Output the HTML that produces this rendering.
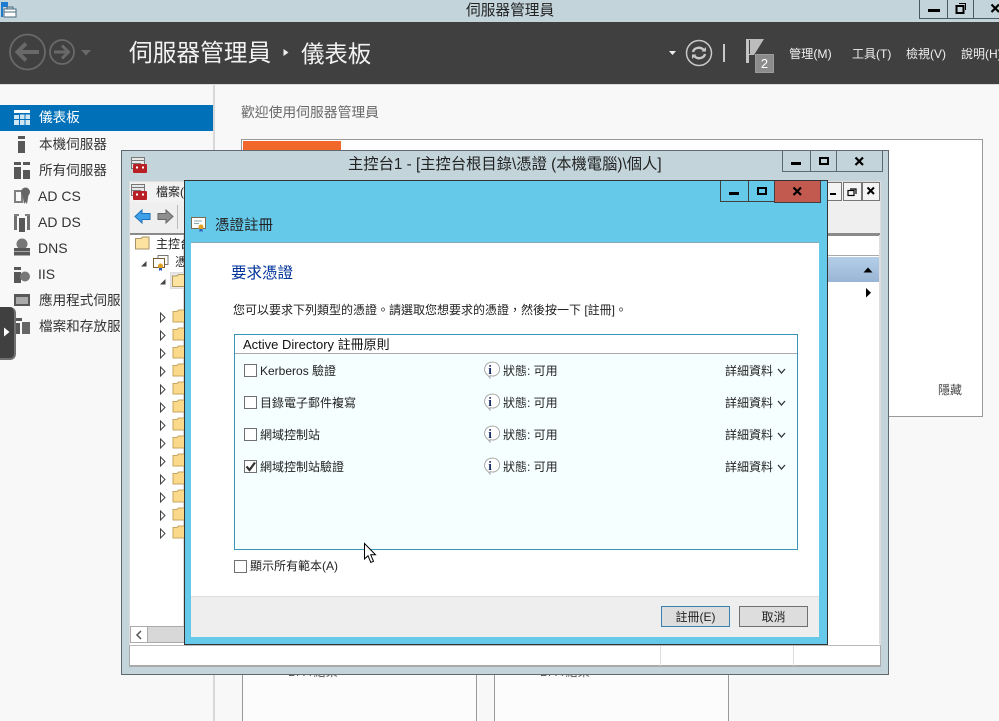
<!DOCTYPE html>
<html><head><meta charset="utf-8">
<style>
html,body{margin:0;padding:0;width:999px;height:721px;overflow:hidden;background:#f8f8f8}
body{position:relative;font-family:"Liberation Sans","Noto Sans CJK TC",sans-serif;font-size:12px;color:#222}
.a{position:absolute;box-sizing:border-box}
.t{position:absolute;white-space:nowrap;line-height:16px}
svg{position:absolute;overflow:visible}
.nav{position:absolute;left:39px;font-size:13.6px;color:#333;line-height:18px;white-space:nowrap}
.en{left:38px;font-size:14px}
.btn{position:absolute;box-sizing:border-box;border:1px solid #4b5a62}
.row{font-size:12px;color:#222}
.cb{position:absolute;left:244px;width:13px;height:13px;border:1px solid #707070;background:#fff;box-sizing:border-box}
</style></head><body>

<!-- main title bar -->
<div class="a" style="left:0;top:0;width:999px;height:22px;background:#c3d5db"></div>
<div class="t" style="left:466px;top:3px;font-size:14.700px;color:#222">伺服器管理員</div>
<svg style="left:1px;top:2px" width="16" height="16"><rect x="0" y="0" width="7" height="5" fill="#1d7bd0"/><rect x="0" y="5" width="2" height="10" fill="#1d7bd0"/><rect x="3" y="7" width="12" height="8" fill="#fff" stroke="#4a6a80"/><rect x="6" y="5" width="6" height="2" fill="none" stroke="#4a6a80"/><line x1="3" y1="10" x2="15" y2="10" stroke="#4a6a80"/></svg>
<div class="btn" style="left:919px;top:-1px;width:29px;height:20px;border-right:none"></div>
<div class="a" style="left:928px;top:9px;width:12px;height:3px;background:#000"></div>
<div class="btn" style="left:947px;top:-1px;width:27px;height:20px"></div>
<svg style="left:955px;top:2px" width="12" height="12"><rect x="1.500" y="4" width="7" height="7" fill="none" stroke="#000" stroke-width="2"/><path d="M4 1.500H10.500V8" fill="none" stroke="#000" stroke-width="1"/></svg>
<div class="btn" style="left:973px;top:-1px;width:30px;height:20px"></div>
<svg style="left:991px;top:4px" width="9" height="9"><path d="M.5 .5L8 8M8 .5L.5 8" stroke="#000" stroke-width="2.200"/></svg>

<!-- dark header -->
<div class="a" style="left:0;top:22px;width:999px;height:62px;background:#404040"></div>
<div class="a" style="left:0;top:84px;width:999px;height:1px;background:#dcdcdc"></div>
<svg style="left:8px;top:33px" width="85" height="40" fill="none" stroke="#696969">
<circle cx="19.500" cy="19" r="17.500" stroke-width="1.800"/>
<path d="M31 19H10M18 10.500L9.500 19L18 27.500" stroke-width="4"/>
<circle cx="54" cy="19" r="12" stroke-width="1.800"/>
<path d="M46 19H61M54 12.500L60.500 19L54 25.500" stroke-width="3"/>
<path d="M73 17H83L78 22.500Z" fill="#696969" stroke="none"/>
</svg>
<div class="t" style="left:129px;top:39px;font-size:23.700px;line-height:30px;color:#f2f2f2">伺服器管理員</div>
<svg style="left:283px;top:48px" width="8" height="10"><path d="M.5 1L5.500 4.500L.5 8Z" fill="#eee"/></svg>
<div class="t" style="left:301px;top:39px;font-size:23.400px;line-height:30px;color:#f2f2f2">儀表板</div>
<svg style="left:668px;top:50px" width="10" height="6"><path d="M1 1H8L4.500 5Z" fill="#eee"/></svg>
<svg style="left:685px;top:39px" width="28" height="28" fill="none"><circle cx="14" cy="14" r="12.500" stroke="#c8c8c8" stroke-width="1.500"/><path d="M8 13C9 8.500 16 7 19 11.500M20 15C19 19.500 12 21 9 16.500" stroke="#c8c8c8" stroke-width="2.400"/><path d="M16.500 12.500L21 12.500L21 8ZM11.500 15.500L7 15.500L7 20Z" fill="#c8c8c8"/></svg>
<div class="a" style="left:723px;top:44px;width:2px;height:18px;background:#c8c8c8"></div>
<svg style="left:745px;top:39px" width="20" height="24"><rect x="1" y="0" width="3" height="24" fill="#c4c4c4"/><path d="M4 0H19L9 16L4 16Z" fill="#bcbcbc"/><rect x="4" y="1" width="1" height="14" fill="#404040"/></svg>
<div class="a" style="left:755px;top:54px;width:19px;height:19px;background:#8c8c8c;border:1px solid #9b9b9b;color:#fff;font-size:13px;line-height:18px;text-align:center">2</div>
<div class="t" style="left:789px;top:46px;color:#f0f0f0;font-size:12.200px">管理(M)</div>
<div class="t" style="left:852px;top:46px;color:#f0f0f0;font-size:12px">工具(T)</div>
<div class="t" style="left:906px;top:46px;color:#f0f0f0;font-size:12px">檢視(V)</div>
<div class="t" style="left:961px;top:46px;color:#f0f0f0;font-size:12px">說明(H)</div>

<!-- sidebar -->
<div class="a" style="left:0;top:85px;width:213px;height:636px;background:#f8f8f8"></div>
<div class="a" style="left:213px;top:85px;width:2px;height:636px;background:#d8d8d8"></div>
<div class="a" style="left:215px;top:85px;width:784px;height:636px;background:#f8f8f8"></div>
<div class="a" style="left:0;top:105px;width:213px;height:26px;background:#0070b9"></div>
<svg style="left:14px;top:110px" width="16" height="15"><rect width="16" height="3" fill="#fff"/><g fill="#cfe6f5"><rect y="5" width="5" height="4"/><rect x="6" y="4.500" width="4.500" height="4.500"/><rect x="11.500" y="4.500" width="4.500" height="4.500"/><rect y="10" width="5" height="5"/><rect x="6" y="10" width="4.500" height="5"/><rect x="11.500" y="10" width="4.500" height="5"/></g></svg>
<div class="nav" style="top:109px;color:#fff">儀表板</div>
<div class="nav" style="top:136px">本機伺服器</div>
<div class="nav" style="top:162px">所有伺服器</div>
<div class="nav en" style="top:187px">AD CS</div>
<div class="nav en" style="top:213px">AD DS</div>
<div class="nav en" style="top:239px">DNS</div>
<div class="nav en" style="top:265px">IIS</div>
<div class="nav" style="top:292px">應用程式伺服器</div>
<div class="nav" style="top:318px">檔案和存放服務</div>
<svg style="left:14px;top:136px" width="17" height="210" fill="#585858">
<rect x="4" y="0" width="7" height="3"/><rect x="4" y="5" width="7" height="12"/>
<rect x="0" y="26" width="7" height="3"/><rect x="0" y="31" width="7" height="12"/><rect x="9" y="26" width="7" height="3"/><rect x="9" y="34" width="7" height="9"/>
<path fill-rule="evenodd" d="M0 54H9V67H0ZM2 56V65H7V56Z" fill="#808080"/><circle cx="11.500" cy="56" r="4.500" fill="#666"/><path d="M8.500 59L10 68L11.500 66L13 68L14.500 59Z" fill="#666"/>
<rect x="0" y="80" width="3" height="14" fill="#707070"/><rect x="13" y="80" width="3" height="14" fill="#707070"/><rect x="5" y="82" width="6" height="14"/><rect x="0" y="78" width="5" height="2" fill="#808080"/><rect x="11" y="78" width="5" height="2" fill="#808080"/>
<circle cx="8" cy="108" r="5.500" fill="#777"/><rect x="0" y="112" width="16" height="3.500"/><rect x="0" y="116" width="16" height="3.500"/>
<rect x="0" y="131" width="7" height="3"/><rect x="0" y="136" width="7" height="11"/><circle cx="11" cy="140.500" r="5" fill="#777"/>
<path fill-rule="evenodd" d="M0 158H16V170H0ZM2 161V168H14V161Z"/><rect x="2" y="161" width="12" height="7" fill="#aaa"/>
<rect x="0" y="182" width="8" height="3"/><rect x="0" y="187" width="6" height="11"/><path d="M8 186H16V198H8Z" fill="#666"/>
</svg>
<!-- flyout handle -->
<div class="a" style="left:0;top:307px;width:16px;height:53px;background:#404040;border-right:2px solid #707070;border-bottom:2px solid #707070;border-radius:0 6px 6px 0"></div>
<svg style="left:3px;top:326px" width="8" height="12"><path d="M1 1.500L6.500 6L1 10.500Z" fill="#fff"/></svg>

<!-- content -->
<div class="t" style="left:241px;top:105px;font-size:13.800px;color:#6a6a6a">歡迎使用伺服器管理員</div>
<div class="a" style="left:241px;top:139px;width:742px;height:278px;background:#fff;border:1px solid #999"></div>
<div class="a" style="left:243px;top:141px;width:98px;height:12px;background:#f2682a"></div>
<div class="t" style="left:938px;top:382px;font-size:12px;color:#444">隱藏</div>
<div class="a" style="left:242px;top:660px;width:235px;height:61px;background:#fcfcfc;border-left:1px solid #999;border-right:1px solid #999"></div>
<div class="a" style="left:494px;top:660px;width:235px;height:61px;background:#fcfcfc;border-left:1px solid #999;border-right:1px solid #999"></div>
<div class="t" style="left:288px;top:664px;font-size:12px;color:#555">BPA 結果</div>
<div class="t" style="left:540px;top:664px;font-size:12px;color:#555">BPA 結果</div>

<!-- console window -->
<div class="a" style="left:121px;top:150px;width:768px;height:525px;background:#c3d5db;border:1px solid #5f6a70"></div>
<svg style="left:131px;top:157px" width="18" height="18"><rect x=".5" y=".5" width="13" height="11" fill="#e8e8e8" stroke="#777"/><path d="M1 3.500H13M1 6.500H10" stroke="#777"/><rect x="2" y="7" width="14" height="9" fill="#b82025" rx="1"/><rect x="5" y="9.500" width="2" height="2" fill="#fff"/><rect x="11" y="9.500" width="2" height="2" fill="#fff"/></svg>
<div class="t" style="left:348px;top:155px;font-size:15.300px;line-height:20px;color:#222">主控台1 - [主控台根目錄\憑證 (本機電腦)\個人]</div>
<div class="a" style="left:782px;top:150px;width:101px;height:22px;border:1px solid #5f6a70;border-top:none"></div>
<div class="a" style="left:810px;top:150px;width:1px;height:21px;background:#5f6a70"></div>
<div class="a" style="left:836px;top:150px;width:1px;height:21px;background:#5f6a70"></div>
<div class="a" style="left:791px;top:162px;width:10px;height:3px;background:#000"></div>
<div class="a" style="left:819px;top:157px;width:10px;height:8px;border:2px solid #000"></div>
<svg style="left:855px;top:157px" width="9" height="9"><path d="M.5 .5L8 8M8 .5L.5 8" stroke="#000" stroke-width="2.200"/></svg>

<!-- inner MDI -->
<div class="a" style="left:129px;top:181px;width:752px;height:485px;background:#fff;border:1px solid #ddd"></div>
<div class="a" style="left:130px;top:182px;width:750px;height:20px;background:#f2f2f2"></div>
<svg style="left:131px;top:184px" width="18" height="18"><rect x=".5" y=".5" width="13" height="11" fill="#e8e8e8" stroke="#777"/><path d="M1 3.500H13M1 6.500H10" stroke="#777"/><rect x="2" y="7" width="14" height="9" fill="#b82025" rx="1"/><rect x="5" y="9.500" width="2" height="2" fill="#fff"/><rect x="11" y="9.500" width="2" height="2" fill="#fff"/></svg>
<div class="t" style="left:156px;top:184px;font-size:12px">檔案(F)</div>
<div class="a" style="left:130px;top:202px;width:750px;height:31px;background:#efefef"></div>
<svg style="left:134px;top:208px" width="42" height="18"><path d="M1 8.500L8 2V5.500H16V11.500H8V15Z" fill="#3fa0e8" stroke="#1c6fb8"/><path d="M39 8.500L32 2V5.500H24V11.500H32V15Z" fill="#8f8f8f" stroke="#666"/></svg>
<div class="a" style="left:177px;top:205px;width:1px;height:24px;background:#bbb"></div>
<div class="a" style="left:130px;top:233px;width:750px;height:2px;background:#8a8a8a"></div>
<div class="a" style="left:130px;top:235px;width:54px;height:392px;background:#fff;border-right:1px solid #ddd"></div>
<!-- mdi right controls -->
<div class="a" style="left:828px;top:182px;width:14px;height:19px;background:#f4f4f4;border:1px solid #777;border-left:none"></div>
<div class="a" style="left:830px;top:193px;width:6px;height:2px;background:#000"></div>
<div class="a" style="left:843px;top:182px;width:19px;height:19px;background:#f4f4f4;border:1px solid #777"></div>
<svg style="left:847px;top:187px" width="11" height="10"><rect x="1" y="3.500" width="6" height="5" fill="none" stroke="#000" stroke-width="1.200"/><path d="M3 2H9V7" fill="none" stroke="#000" stroke-width="1.200"/></svg>
<div class="a" style="left:862px;top:182px;width:18px;height:19px;background:#f4f4f4;border:1px solid #777"></div>
<svg style="left:867px;top:187px" width="8" height="8"><path d="M.5 .5L7 7M7 .5L.5 7" stroke="#000" stroke-width="2"/></svg>
<!-- right pane -->
<div class="a" style="left:827px;top:234px;width:52px;height:2px;background:#8a8a8a"></div>
<div class="a" style="left:827px;top:255px;width:52px;height:1px;background:#aaa"></div>
<div class="a" style="left:827px;top:257px;width:52px;height:25px;background:linear-gradient(#b4cee8,#9ab6d6)"></div>
<svg style="left:862px;top:266px" width="12" height="8"><path d="M1.500 6.500L6 1.500L10.500 6.500Z" fill="#000"/></svg>
<svg style="left:865px;top:287px" width="8" height="12"><path d="M1 1V10.500L6 5.700Z" fill="#000"/></svg>
<div class="a" style="left:879px;top:235px;width:1px;height:409px;background:#ddd"></div>
<!-- tree -->
<svg style="left:135px;top:236px" width="16" height="14"><path d="M.5 2.500H6L7.500 1H14V13H.5Z" fill="#fde3a0" stroke="#a89468"/></svg>
<div class="t" style="left:156px;top:236px;font-size:12px">主控台根目錄</div>
<svg style="left:140px;top:260px" width="8" height="8"><path d="M6.500 1V6.500H1Z" fill="#444"/></svg>
<svg style="left:153px;top:255px" width="16" height="16"><rect x="5" y=".5" width="10" height="9" fill="#fff" stroke="#777"/><rect x=".5" y="3.500" width="11" height="9" fill="#fff" stroke="#7a5c30"/><circle cx="7.500" cy="11" r="2.500" fill="#e0a020"/><path d="M6 13V16L7.500 15L9 16V13Z" fill="#2a5cc0"/></svg>
<div class="t" style="left:175px;top:254px;font-size:12px">憑證</div>
<svg style="left:159px;top:278px" width="8" height="8"><path d="M6.500 1V6.500H1Z" fill="#444"/></svg>
<div class="a" style="left:170px;top:272px;width:16px;height:17px;background:#e8e8e8;border:1px solid #ddd"></div>
<svg style="left:172px;top:274px" width="14" height="13"><path d="M.5 2H5L6.500 .5H14V12.500H.5Z" fill="#fde3a0" stroke="#b09a60"/></svg>
<!-- folders -->
<svg style="left:158px;top:309px" width="28" height="232">
<defs><g id="fr"><path d="M2.500 4V13L7 8.500Z" fill="#fff" stroke="#444"/><path d="M15 2.500H19L20.500 1H28V13H15Z" fill="#fbd98a" stroke="#c4a660"/></g></defs>
<use href="#fr" y="0"/><use href="#fr" y="18"/><use href="#fr" y="36"/><use href="#fr" y="54"/><use href="#fr" y="72"/><use href="#fr" y="90"/><use href="#fr" y="108"/><use href="#fr" y="126"/><use href="#fr" y="144"/><use href="#fr" y="162"/><use href="#fr" y="180"/><use href="#fr" y="198"/><use href="#fr" y="216"/>
</svg>
<!-- scrollbar -->
<div class="a" style="left:130px;top:626px;width:54px;height:17px;background:#d8d8d8;border:1px solid #aaa;border-right:none"></div>
<div class="a" style="left:131px;top:627px;width:17px;height:15px;background:#fff;border-right:1px solid #aaa"></div>
<svg style="left:135px;top:630px" width="8" height="10"><path d="M6 1L2 5L6 9" fill="none" stroke="#555" stroke-width="1.500"/></svg>
<!-- status bar -->
<div class="a" style="left:129px;top:645px;width:752px;height:22px;background:#fff;border:1px solid #aaa;border-top:1px solid #bbb;border-bottom:2px solid #aaa"></div>
<div class="a" style="left:660px;top:646px;width:1px;height:20px;background:#ddd"></div>
<div class="a" style="left:793px;top:646px;width:1px;height:20px;background:#ddd"></div>

<!-- dialog -->
<div class="a" style="left:184px;top:180px;width:644px;height:465px;background:#65c9ea;border:1px solid #333"></div>
<div class="a" style="left:720px;top:181px;width:101px;height:21px;border:1px solid #404040;border-top:none;background:#65c9ea"></div>
<div class="a" style="left:748px;top:181px;width:1px;height:21px;background:#404040"></div>
<div class="a" style="left:774px;top:181px;width:47px;height:22px;background:#c25a50;border:1px solid #404040;border-top:none"></div>
<div class="a" style="left:729px;top:192px;width:10px;height:3px;background:#000"></div>
<div class="a" style="left:757px;top:187px;width:10px;height:8px;border:2px solid #000"></div>
<svg style="left:793px;top:187px" width="9" height="9"><path d="M.5 .5L8 8M8 .5L.5 8" stroke="#000" stroke-width="2.200"/></svg>
<svg style="left:191px;top:217px" width="17" height="15"><rect x=".5" y=".5" width="14" height="11" fill="#fff" stroke="#7a6a50"/><path d="M3 4H11M3 6.500H8" stroke="#8aa"/><circle cx="10" cy="10" r="2.500" fill="#e0a020"/><path d="M8.500 12V15L10 14L11.500 15V12Z" fill="#2a5cc0"/></svg>
<div class="t" style="left:215px;top:217px;font-size:14.500px;line-height:18px;color:#222">憑證註冊</div>
<div class="a" style="left:191px;top:242px;width:628px;height:395px;background:#fff;border-top:1px solid #8aa8b4"></div>
<div class="t" style="left:231px;top:264px;font-size:15.500px;line-height:20px;color:#003399">要求憑證</div>
<div class="t" style="left:233px;top:302px;font-size:12px;color:#222">您可以要求下列類型的憑證。請選取您想要求的憑證，然後按一下 [註冊]。</div>
<div class="a" style="left:234px;top:334px;width:564px;height:216px;background:#f5ffff;border:1px solid #3a94b8"></div>
<div class="a" style="left:235px;top:335px;width:562px;height:19px;background:#fff;border-bottom:1px solid #aaa"></div>
<div class="t" style="left:243px;top:337px;font-size:13px;color:#111">Active Directory 註冊原則</div>

<div class="cb" style="top:364px"></div>
<div class="t row" style="left:260px;top:363px">Kerberos 驗證</div>
<div class="cb" style="top:396px"></div>
<div class="t row" style="left:260px;top:395px">目錄電子郵件複寫</div>
<div class="cb" style="top:428px"></div>
<div class="t row" style="left:260px;top:427px">網域控制站</div>
<div class="cb" style="top:460px"></div>
<svg style="left:245px;top:461px" width="12" height="11"><path d="M1.500 5.500L4.500 9L10 1.500" fill="none" stroke="#333" stroke-width="2.200"/></svg>
<div class="t row" style="left:260px;top:459px">網域控制站驗證</div>

<svg style="left:482px;top:362px" width="16" height="112">
<defs><g id="inf"><path d="M8 .5A7 7 0 1 1 8 13.500L8 16L5.500 13A7 7 0 0 1 8 .5Z" fill="#fff" stroke="#aaa"/><text x="8" y="12" font-family="Liberation Serif" font-size="13" font-weight="bold" text-anchor="middle" fill="#1a2f6a">i</text></g></defs>
<use href="#inf" y="0"/><use href="#inf" y="32"/><use href="#inf" y="64"/><use href="#inf" y="96"/>
</svg>
<div class="t row" style="left:503px;top:363px">狀態: 可用</div>
<div class="t row" style="left:503px;top:395px">狀態: 可用</div>
<div class="t row" style="left:503px;top:427px">狀態: 可用</div>
<div class="t row" style="left:503px;top:459px">狀態: 可用</div>
<div class="t row" style="left:725px;top:363px">詳細資料</div>
<div class="t row" style="left:725px;top:395px">詳細資料</div>
<div class="t row" style="left:725px;top:427px">詳細資料</div>
<div class="t row" style="left:725px;top:459px">詳細資料</div>
<svg style="left:777px;top:368px" width="9" height="104" fill="none" stroke="#333" stroke-width="1.300"><path d="M1 1L4.500 5L8 1M1 33L4.500 37L8 33M1 65L4.500 69L8 65M1 97L4.500 101L8 97"/></svg>

<div class="a" style="left:234px;top:560px;width:13px;height:13px;background:#fff;border:1px solid #707070"></div>
<div class="t" style="left:250px;top:558px;font-size:12px;color:#222">顯示所有範本(A)</div>

<div class="a" style="left:191px;top:596px;width:628px;height:41px;background:#eee;border-top:1px solid #ddd"></div>
<div class="a" style="left:661px;top:606px;width:69px;height:21px;background:#ddd;border:1px solid #3a80b0;text-align:center;font-size:12px;line-height:21px;color:#222">註冊(E)</div>
<div class="a" style="left:739px;top:606px;width:69px;height:21px;background:#ddd;border:1px solid #707070;text-align:center;font-size:12px;line-height:21px;color:#222">取消</div>

<!-- cursor -->
<svg style="left:364px;top:543px" width="13" height="22"><path d="M.5 .5V16L4 12.700L6.800 19.500L9.500 18.300L6.700 11.800H11.500Z" fill="#fff" stroke="#000"/></svg>
</body></html>
